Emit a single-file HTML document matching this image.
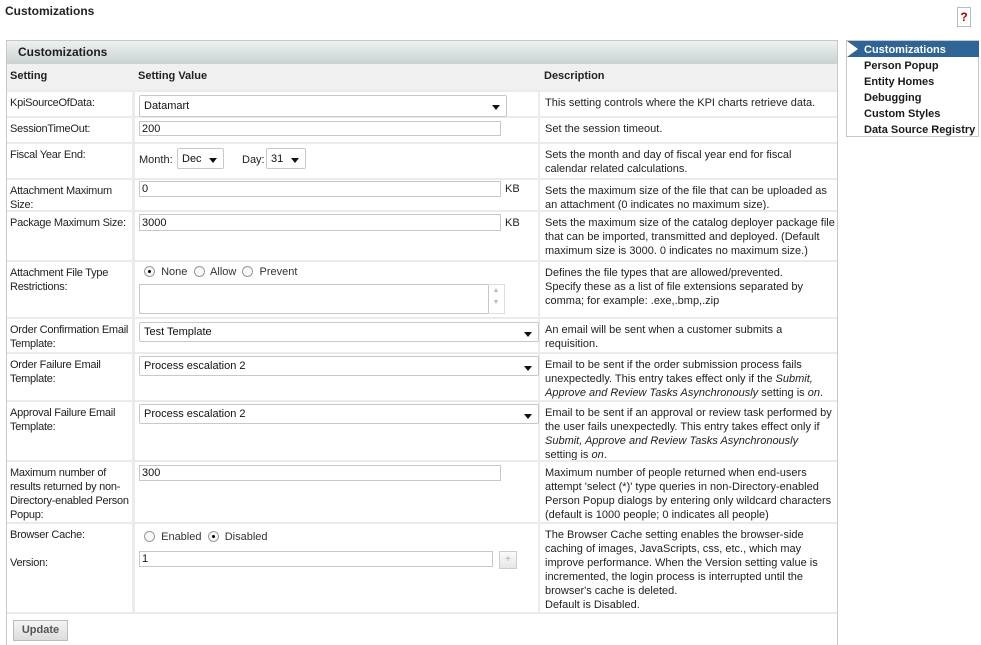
<!DOCTYPE html>
<html><head><meta charset="utf-8"><style>
*{box-sizing:border-box;margin:0;padding:0}
body{width:981px;height:645px;overflow:hidden;background:#fff;font-family:"Liberation Sans",Arial,sans-serif;font-size:11px;color:#222;position:relative}
.a{position:absolute}
.c{position:absolute;background:#fff;padding:4px 0 0 3px;line-height:14px;white-space:nowrap;overflow:hidden}
.l{letter-spacing:-0.25px}
.d{padding-left:5px}
.b{font-weight:bold}
.in{position:absolute;border:1px solid #c8c8c8;background:#fff;height:20px;padding:3px 2px;font-size:11px;line-height:13px;color:#111}
.sel{position:absolute;border:1px solid #c8c8c8;border-radius:2px;background:#fff;height:22px;padding:4px 4px;font-size:11px;line-height:13px;color:#111}
.sel:after{content:"";position:absolute;right:6px;top:9px;border-left:4px solid transparent;border-right:4px solid transparent;border-top:5px solid #111}
.rad{display:inline-block;width:11px;height:11px;border:1px solid #999;border-radius:50%;vertical-align:-2px;position:relative;background:#f8f8f8}
.rad.on:after{content:"";position:absolute;left:3px;top:3px;width:3px;height:3px;background:#000;border-radius:50%}
i{font-style:italic}
</style></head><body>
<div class="a b" style="left:5px;top:4px;font-size:12px">Customizations</div>
<div class="a" style="left:957px;top:7px;width:14px;height:20px;border:1px solid #bbb;color:#b00000;font-weight:bold;font-size:12px;text-align:center;line-height:18px">?</div>

<div class="a" style="left:6px;top:40px;width:832px;height:605px;background:#ebebeb;border:1px solid #c8c8c8;border-bottom:none"></div>
<div class="a b" style="left:7px;top:41px;width:830px;height:23px;background:linear-gradient(#eef1f1,#c9d1d1);font-size:12px;padding:4px 0 0 11px;color:#1d1d1d">Customizations</div>
<div class="a b" style="left:7px;top:64px;width:830px;height:26px;background:#f0f0f0;color:#222"></div>
<div class="a b" style="left:10px;top:70px">Setting</div>
<div class="a b" style="left:138px;top:70px">Setting Value</div>
<div class="a b" style="left:544px;top:70px">Description</div>

<div class="c l" style="left:7px;top:92px;width:125px;height:24px">KpiSourceOfData:</div>
<div class="c" style="left:135px;top:92px;width:403px;height:24px"></div>
<div class="c d" style="left:540px;top:92px;width:297px;height:24px">This setting controls where the KPI charts retrieve data.</div>
<div class="sel" style="left:139px;top:95px;width:368px">Datamart</div>

<div class="c l" style="left:7px;top:118px;width:125px;height:24px">SessionTimeOut:</div>
<div class="c" style="left:135px;top:118px;width:403px;height:24px"></div>
<div class="c d" style="left:540px;top:118px;width:297px;height:24px">Set the session timeout.</div>
<div class="in" style="left:139px;top:121px;width:362px;height:15px;padding:1px 2px">200</div>

<div class="c l" style="left:7px;top:144px;width:125px;height:34px">Fiscal Year End:</div>
<div class="c" style="left:135px;top:144px;width:403px;height:34px"></div>
<div class="c d" style="left:540px;top:144px;width:297px;height:34px">Sets the month and day of fiscal year end for fiscal<br>calendar related calculations.</div>
<div class="a" style="left:139px;top:154px">Month:</div>
<div class="sel" style="left:177px;top:148px;width:47px;height:21px">Dec</div>
<div class="a" style="left:242px;top:154px">Day:</div>
<div class="sel" style="left:266px;top:148px;width:40px;height:21px">31</div>

<div class="c l" style="left:7px;top:180px;width:125px;height:30px">Attachment Maximum<br>Size:</div>
<div class="c" style="left:135px;top:180px;width:403px;height:30px"></div>
<div class="c d" style="left:540px;top:180px;width:297px;height:30px">Sets the maximum size of the file that can be uploaded as<br>an attachment (0 indicates no maximum size).</div>
<div class="in" style="left:139px;top:181px;width:362px;height:16px;padding:1px 2px">0</div>
<div class="a" style="left:505px;top:183px">KB</div>

<div class="c l" style="left:7px;top:212px;width:125px;height:48px">Package Maximum Size:</div>
<div class="c" style="left:135px;top:212px;width:403px;height:48px"></div>
<div class="c d" style="left:540px;top:212px;width:297px;height:48px">Sets the maximum size of the catalog deployer package file<br>that can be imported, transmitted and deployed. (Default<br>maximum size is 3000. 0 indicates no maximum size.)</div>
<div class="in" style="left:139px;top:214px;width:362px;height:17px;padding:2px 2px">3000</div>
<div class="a" style="left:505px;top:217px">KB</div>

<div class="c l" style="left:7px;top:262px;width:125px;height:55px">Attachment File Type<br>Restrictions:</div>
<div class="c" style="left:135px;top:262px;width:403px;height:55px"></div>
<div class="c d" style="left:540px;top:262px;width:297px;height:55px">Defines the file types that are allowed/prevented.<br>Specify these as a list of file extensions separated by<br>comma; for example: .exe,.bmp,.zip</div>
<div class="a" style="left:144px;top:266px;color:#333"><span class="rad on"></span>&nbsp; None &nbsp;<span class="rad"></span>&nbsp; Allow &nbsp;<span class="rad"></span>&nbsp; Prevent</div>
<div class="a" style="left:139px;top:284px;width:350px;height:30px;border:1px solid #c8c8c8"></div>
<div class="a" style="left:488px;top:284px;width:17px;height:30px;border:1px solid #ddd;border-left:none;color:#bbb;font-size:7px;text-align:center;line-height:12px">▲<br>▼</div>

<div class="c l" style="left:7px;top:319px;width:125px;height:33px">Order Confirmation Email<br>Template:</div>
<div class="c" style="left:135px;top:319px;width:403px;height:33px"></div>
<div class="c d" style="left:540px;top:319px;width:297px;height:33px">An email will be sent when a customer submits a<br>requisition.</div>
<div class="sel" style="left:139px;top:322px;width:400px;height:20px;padding:3px 4px">Test Template</div>

<div class="c l" style="left:7px;top:354px;width:125px;height:46px">Order Failure Email<br>Template:</div>
<div class="c" style="left:135px;top:354px;width:403px;height:46px"></div>
<div class="c d" style="left:540px;top:354px;width:297px;height:46px">Email to be sent if the order submission process fails<br>unexpectedly. This entry takes effect only if the <i>Submit,</i><br><i>Approve and Review Tasks Asynchronously</i> setting is <i>on</i>.</div>
<div class="sel" style="left:139px;top:356px;width:400px;height:20px;padding:3px 4px">Process escalation 2</div>

<div class="c l" style="left:7px;top:402px;width:125px;height:58px">Approval Failure Email<br>Template:</div>
<div class="c" style="left:135px;top:402px;width:403px;height:58px"></div>
<div class="c d" style="left:540px;top:402px;width:297px;height:58px">Email to be sent if an approval or review task performed by<br>the user fails unexpectedly. This entry takes effect only if<br><i>Submit, Approve and Review Tasks Asynchronously</i><br>setting is <i>on</i>.</div>
<div class="sel" style="left:139px;top:404px;width:400px;height:20px;padding:3px 4px">Process escalation 2</div>

<div class="c l" style="left:7px;top:462px;width:125px;height:60px">Maximum number of<br>results returned by non-<br>Directory-enabled Person<br>Popup:</div>
<div class="c" style="left:135px;top:462px;width:403px;height:60px"></div>
<div class="c d" style="left:540px;top:462px;width:297px;height:60px">Maximum number of people returned when end-users<br>attempt 'select (*)' type queries in non-Directory-enabled<br>Person Popup dialogs by entering only wildcard characters<br>(default is 1000 people; 0 indicates all people)</div>
<div class="in" style="left:139px;top:465px;width:362px;height:16px;padding:1px 2px">300</div>

<div class="c l" style="left:7px;top:524px;width:125px;height:88px">Browser Cache:<br><br>Version:</div>
<div class="c" style="left:135px;top:524px;width:403px;height:88px"></div>
<div class="c d" style="left:540px;top:524px;width:297px;height:88px">The Browser Cache setting enables the browser-side<br>caching of images, JavaScripts, css, etc., which may<br>improve performance. When the Version setting value is<br>incremented, the login process is interrupted until the<br>browser's cache is deleted.<br>Default is Disabled.</div>
<div class="a" style="left:144px;top:531px;color:#333"><span class="rad"></span>&nbsp; Enabled &nbsp;<span class="rad on"></span>&nbsp; Disabled</div>
<div class="in" style="left:139px;top:551px;width:354px;height:16px;padding:1px 2px">1</div>
<div class="a" style="left:499px;top:551px;width:18px;height:18px;border:1px solid #ccc;background:linear-gradient(#fafafa,#e6e6e6);color:#aaa;text-align:center;line-height:16px;font-size:10px">+</div>

<div class="a" style="left:7px;top:614px;width:830px;height:31px;background:#fff"></div>
<div class="a b" style="left:13px;top:620px;width:55px;height:21px;border:1px solid #bbb;background:linear-gradient(#f4f4f4,#dcdcdc);color:#555;text-align:center;line-height:19px">Update</div>

<div class="a" style="left:846px;top:40px;width:133px;height:97px;border:1px solid #c8c8c8;background:#fff"></div>
<div class="a" style="left:847px;top:41px;width:132px;height:16px;background:#2f6496"></div>
<div class="a" style="left:847px;top:41px;width:0;height:0;border-top:8px solid transparent;border-bottom:8px solid transparent;border-left:11px solid #fff"></div>
<div class="a b" style="left:864px;top:42px;line-height:16px;color:#fff">Customizations</div>
<div class="a b" style="left:864px;top:58px;line-height:16px;color:#1a1a1a">Person Popup<br>Entity Homes<br>Debugging<br>Custom Styles<br>Data Source Registry</div>
</body></html>
